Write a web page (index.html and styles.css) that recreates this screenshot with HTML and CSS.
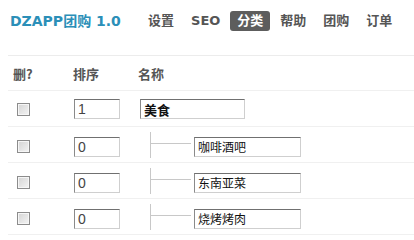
FILE: index.html
```html
<!DOCTYPE html>
<html lang="zh">
<head>
<meta charset="utf-8">
<link rel="stylesheet" href="styles.css">
</head>
<body>
<div class="page">
  <header class="top">
    <div class="brand">DZAPP团购 1.0</div>
    <nav class="nav">
      <a class="nav-item">设置</a>
      <a class="nav-item">SEO</a>
      <a class="nav-item active">分类</a>
      <a class="nav-item">帮助</a>
      <a class="nav-item">团购</a>
      <a class="nav-item">订单</a>
    </nav>
  </header>
  <div class="table">
    <div class="row head">
      <div class="c1 th">删?</div>
      <div class="c2 th">排序</div>
      <div class="c3 th">名称</div>
    </div>
    <div class="row">
      <div class="c1"><input class="chk" type="checkbox"></div>
      <div class="c2"><input class="num" type="text" value="1"></div>
      <div class="c3"><input class="name parent" type="text" value="美食"></div>
    </div>
    <div class="row">
      <div class="c1"><input class="chk" type="checkbox"></div>
      <div class="c2"><input class="num" type="text" value="0"></div>
      <div class="c3"><span class="tree"><span class="branch"></span></span><input class="name child" type="text" value="咖啡酒吧"></div>
    </div>
    <div class="row">
      <div class="c1"><input class="chk" type="checkbox"></div>
      <div class="c2"><input class="num" type="text" value="0"></div>
      <div class="c3"><span class="tree"><span class="branch"></span></span><input class="name child" type="text" value="东南亚菜"></div>
    </div>
    <div class="row">
      <div class="c1"><input class="chk" type="checkbox"></div>
      <div class="c2"><input class="num" type="text" value="0"></div>
      <div class="c3"><span class="tree"><span class="branch"></span></span><input class="name child" type="text" value="烧烤烤肉"></div>
    </div>
  </div>
</div>
</body>
</html>
```

FILE: styles.css
```css
* { box-sizing: border-box; }
html, body { margin: 0; background: #fff; }
body {
  font-family: "DejaVu Sans", "Noto Sans CJK SC", sans-serif;
  color: #555;
}
.page { padding-left: 8px; }

.top {
  display: flex;
  align-items: center;
  padding: 11px 0 24px;
  border-bottom: 1px solid #ececec;
}
.brand {
  flex: 0 0 133px;
  padding-left: 2px;
  font-size: 14px;
  font-weight: bold;
  color: #2b8fb8;
  line-height: 20px;
}
.nav { display: flex; gap: 3px; }
.nav-item {
  display: block;
  height: 20px;
  line-height: 20px;
  padding: 0 7px;
  font-size: 13px;
  font-weight: bold;
  color: #555;
  border-radius: 3px;
}
.nav-item.active { background: #5d5d5d; color: #fff; }

.row {
  display: grid;
  grid-template-columns: 65px 64px 1fr;
  align-items: center;
  height: 36px;
  padding: 8px 0 7px;
  border-bottom: 1px solid #f0f0f0;
}
.row.head { height: 35px; padding: 0; }
.th {
  font-size: 13px;
  font-weight: bold;
  color: #555;
  font-family: "Noto Sans CJK SC", sans-serif;
}
.c1.th { padding-left: 5px; }
.c3.th { padding-left: 1px; }
.c1, .c2, .c3 { display: flex; align-items: center; }

.chk {
  appearance: none;
  -webkit-appearance: none;
  margin: 0 0 0 9px;
  width: 13px;
  height: 13px;
  border: 1px solid #8c8c8c;
  background: linear-gradient(135deg, #d4d4d4, #f4f4f4);
  box-shadow: inset 0 0 0 1px #f6f6f6;
}

input[type="text"] {
  height: 20px;
  margin: 0;
  padding: 0 3px;
  border: 1px solid;
  border-color: #707070 #cfcfcf #cfcfcf #8a8a8a;
  background: #fff;
  outline: none;
}
.num {
  width: 46px;
  margin-left: 1px !important;
  font-family: "Liberation Sans", Arial, sans-serif;
  font-size: 14px;
  color: #444;
}
.name {
  font-family: "Noto Sans CJK SC", sans-serif;
  color: #111;
}
.parent {
  width: 105px;
  margin-left: 3px !important;
  font-size: 13px;
  font-weight: bold;
}
.child {
  width: 107px;
  margin-left: 3px !important;
  font-size: 12px;
}
.tree {
  display: flex;
  align-items: flex-start;
  width: 41px;
  height: 26px;
  margin-left: 13px;
  border-left: 1px solid #c8c8c8;
  margin-top: -3px;
}
.branch {
  display: block;
  width: 40px;
  height: 1px;
  margin-top: 11px;
  background: #c8c8c8;
}
```
